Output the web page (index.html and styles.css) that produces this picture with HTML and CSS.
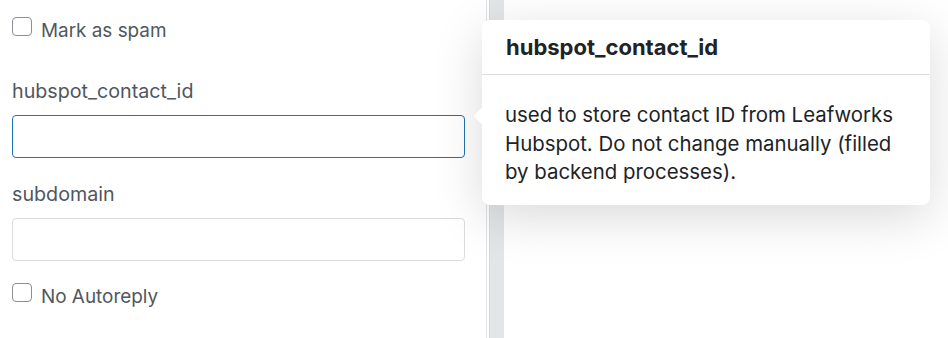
FILE: index.html
```html
<!DOCTYPE html>
<html lang="en">

<head>
  <meta charset="UTF-8">
  <meta name="viewport" content="width=device-width, initial-scale=1.0">
  <title>Contact fields</title>
  <link rel="stylesheet" href="styles.css">
</head>

<body>
  <div class="layout">
    <div class="panel">
      <label class="check">
        <input type="checkbox">
        <span>Mark as spam</span>
      </label>

      <div class="field">
        <label for="hubspot">hubspot_contact_id</label>
        <input type="text" id="hubspot" class="text focus">
      </div>

      <div class="field">
        <label for="subdomain">subdomain</label>
        <input type="text" id="subdomain" class="text">
      </div>

      <label class="check">
        <input type="checkbox">
        <span>No Autoreply</span>
      </label>
    </div>
    <div class="track"></div>
    <div class="side"></div>
  </div>

  <div class="popover">
    <div class="popover-title">hubspot_contact_id</div>
    <div class="popover-body">used to store contact ID from Leafworks Hubspot. Do not change manually (filled by backend processes).</div>
  </div>
</body>

</html>
```

FILE: styles.css
```css
body {
  margin: 0;
  font-family: Inter, "Liberation Sans", sans-serif;
  font-size: 19.7px;
  color: #50575e;
  background-color: #fff;
}

.layout {
  display: flex;
  height: 338px;
}

.panel {
  width: 453px;
  padding: 14px 21px 0 12px;
  border-right: 1px solid #e2e4e7;
}

.track {
  width: 14px;
  margin-left: 2px;
  background-color: #e4e5e7;
  border-left: 1px solid #d8dadd;
}

.side {
  flex: 1;
  background-color: #fff;
}

.check {
  display: flex;
  align-items: center;
  gap: 9px;
  height: 24px;
  font-size: 18.9px;
}

.check input {
  appearance: none;
  width: 20px;
  height: 19px;
  margin: 0;
  border: 1px solid #8c8f94;
  border-radius: 4px;
  background-color: #fff;
}

.check span {
  position: relative;
  top: 4px;
}

.field {
  display: flex;
  flex-direction: column;
  margin-top: 41px;
}

.field label {
  margin-bottom: 12px;
  line-height: 24px;
}

.field + .field {
  margin-top: 24px;
}

.field + .check {
  margin-top: 19px;
}

.text {
  height: 43px;
  box-sizing: border-box;
  margin: 0;
  border: 1px solid #dcdcde;
  border-radius: 4px;
  background-color: #fff;
}

.text.focus {
  border-color: #2271b1;
}

.popover {
  position: absolute;
  left: 482px;
  top: 20px;
  width: 448px;
  background-color: #fff;
  border-radius: 8px;
  box-shadow: 0 12px 50px rgba(0, 0, 0, 0.15);
  color: #1d2327;
}

.popover::before {
  content: '';
  position: absolute;
  left: -6px;
  top: 90px;
  width: 12px;
  height: 12px;
  background-color: #fff;
  transform: rotate(45deg);
}

.popover-title {
  padding: 16px 24px;
  font-size: 22px;
  font-weight: 700;
  line-height: 22px;
  border-bottom: 1px solid #dcdcde;
}

.popover-body {
  position: relative;
  padding: 26px 24px 18px 23px;
  font-size: 20.4px;
  line-height: 28.5px;
}
```
